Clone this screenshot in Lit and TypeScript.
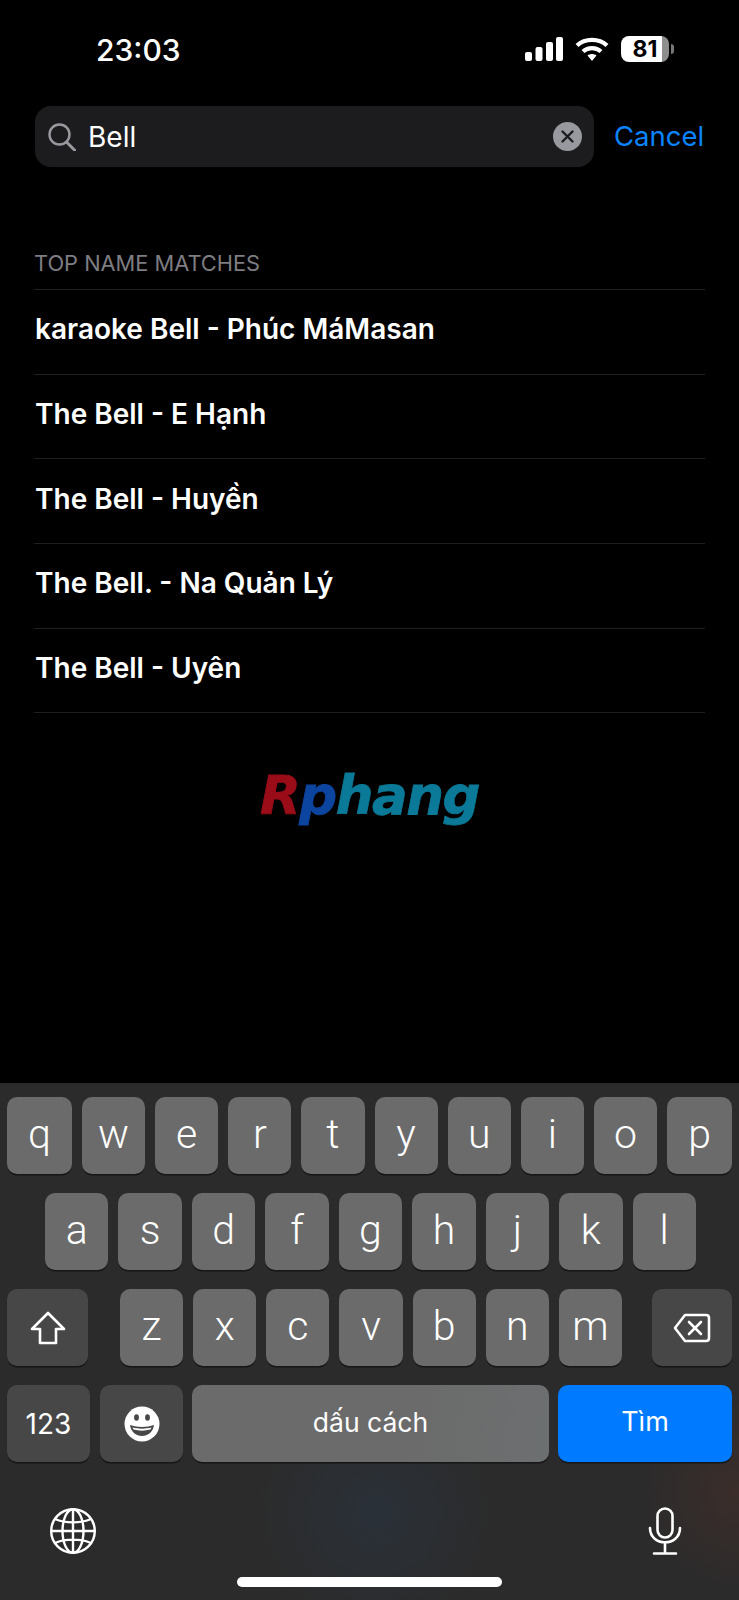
import { LitElement, html, css, svg } from "lit";
import { customElement } from "lit/decorators.js";

const row1 = ["q", "w", "e", "r", "t", "y", "u", "i", "o", "p"];
const row2 = ["a", "s", "d", "f", "g", "h", "j", "k", "l"];
const row3 = ["z", "x", "c", "v", "b", "n", "m"];
const names = ["karaoke Bell - Phúc MáMasan", "The Bell - E Hạnh", "The Bell - Huyền", "The Bell. - Na Quản Lý", "The Bell - Uyên"];

@customElement("app-root")
export class AppRoot extends LitElement {
  static styles = css`
    :host { display: block; width: 739px; height: 1600px; background: #000; color: #fff; font-family: Inter, "Noto Sans", sans-serif; overflow: hidden; }
    .screen { height: 1600px; display: flex; flex-direction: column; }
    .status { height: 106px; flex: none; display: flex; justify-content: space-between; align-items: flex-start; padding: 36px 66px 0 96px; box-sizing: border-box; }
    .time { font-size: 30px; font-weight: 500; line-height: 28px; }
    .status-icons { display: flex; align-items: center; gap: 12px; }
    .battery { position: relative; width: 48px; height: 26px; border-radius: 8px; background: linear-gradient(90deg, #fff 0 41px, #8e8e8e 41px); color: #000; font: 700 23px/26px Inter, sans-serif; text-align: center; margin-right: 4px; }
    .battery::after { content: ""; position: absolute; right: -5px; top: 8px; width: 3px; height: 10px; border-radius: 0 3px 3px 0; background: #777; }
    .search-row { display: flex; align-items: center; height: 61px; flex: none; padding-left: 35px; }
    .search { width: 559px; height: 61px; box-sizing: border-box; background: #1c1c1e; border-radius: 16px; display: flex; align-items: center; padding: 0 12px 0 13px; }
    .search-text { font-size: 28px; margin-left: 12px; flex: 1; }
    .clear { display: block; }
    .cancel { color: #0a84ff; font-size: 27.5px; margin-left: 20px; padding-bottom: 2px; }
    .list { padding: 0 34px; margin-top: 78px; flex: none; }
    .label { color: #7d7d82; font-size: 21.8px; line-height: 34px; padding: 1px 1px 10px 0; height: 45px; box-sizing: border-box; border-bottom: 1px solid #1f1f1f; }
    .item { height: 84.7px; box-sizing: border-box; border-bottom: 1px solid #1f1f1f; display: flex; align-items: center; font-size: 28px; font-weight: 600; padding: 0 1px 5px; }
    .logo-wrap { flex: 1; display: flex; justify-content: center; padding-top: 53px; }
    .logo { font: italic 700 53px/60px "DejaVu Sans", sans-serif; letter-spacing: -1.5px; height: 60px; -webkit-text-stroke: 0.8px currentColor; }
    .logo .r { color: #9a0d18; }
    .logo .p { color: #0c45a0; }
    .logo .h { color: #0b7a98; }
    .kb { flex: none; height: 517px; box-sizing: border-box; padding-top: 14px; display: flex; flex-direction: column;
      background:
        radial-gradient(circle at 375px 430px, rgba(40,60,85,.32), transparent 120px),
        radial-gradient(circle at 739px 410px, rgba(95,50,40,.3), transparent 100px),
        #2b2b2b; }
    .row { display: flex; height: 77px; margin: 0 7px 19px; gap: 10px; flex: none; }
    .row.two { margin: 0 43px 19px 45px; }
    .key { flex: 1 1 0; border-radius: 10px; background: #6b6b6b; box-shadow: 0 1.5px 0 #161616; display: flex; align-items: center; justify-content: center; font-family: Roboto, sans-serif; font-weight: 300; font-size: 41px; padding-bottom: 4px; box-sizing: border-box; min-width: 0; }
    .edge { flex: 0 0 65px; }
    .dark { background: #474747; }
    .shift { flex: 0 0 81px; padding: 0; margin-right: 22px; }
    .del { flex: 0 0 80px; padding: 0; margin-left: 20px; }
    .num { flex: 0 0 83px; font: 400 28px Inter, sans-serif; padding: 0; }
    .emoji { flex: 0 0 83px; padding: 0; margin-right: -1px; }
    .space { flex: 0 0 357px; font: 400 26.5px Inter, sans-serif; background: linear-gradient(100deg, #6b6b6b 60%, #6c6f70); padding: 0 0 4px; margin-right: -1px; }
    .go { flex: 0 0 174px; background: #007aff; font: 400 27px Inter, sans-serif; padding: 0 0 4px; }
    .bottom { display: flex; justify-content: space-between; align-items: center; padding: 0 57px 0 50px; height: 48px; margin-top: 26px; flex: none; }
    .home-wrap { display: flex; justify-content: center; margin-top: 22px; }
    .home { width: 265px; height: 10px; border-radius: 5px; background: #fff; }
    svg { display: block; }
  `;

  private icon(w: number, h: number, body: unknown) {
    return html`<svg width=${w} height=${h} viewBox="0 0 ${w} ${h}" fill="none">${body}</svg>`;
  }

  render() {
    return html`<div class="screen">
      <div class="status">
        <div class="time">23:03</div>
        <div class="status-icons">
          ${this.icon(38, 24, svg`<g fill="#fff"><rect x="0" y="15" width="7" height="9" rx="2"/><rect x="10.500" y="10" width="7" height="14" rx="2"/><rect x="21" y="5" width="7" height="19" rx="2"/><rect x="31" y="0" width="7" height="24" rx="2"/></g>`)}
          ${this.icon(34, 24, svg`<g stroke="#fff" stroke-width="4.200"><path d="M2 8.500C10 1 24 1 32 8.500"/><path d="M8 14.500C13 10 21 10 26 14.500"/></g><path d="M12.500 18.500C15 16.500 19 16.500 21.500 18.500L17 24Z" fill="#fff"/>`)}
          <div class="battery">81</div>
        </div>
      </div>
      <div class="search-row">
        <div class="search">
          ${this.icon(28, 28, svg`<circle cx="11.500" cy="11.500" r="10" stroke="#98989f" stroke-width="2.400"/><path d="M18.500 19L27 27.500" stroke="#98989f" stroke-width="3" stroke-linecap="round"/>`)}
          <span class="search-text">Bell</span>
          <span class="clear">${this.icon(29, 29, svg`<circle cx="14.500" cy="14.500" r="14.500" fill="#98989f"/><path d="M9.500 9.500L19.500 19.500M19.500 9.500L9.500 19.500" stroke="#1c1c1e" stroke-width="2.400" stroke-linecap="round"/>`)}</span>
        </div>
        <span class="cancel">Cancel</span>
      </div>
      <div class="list">
        <div class="label">TOP NAME MATCHES</div>
        ${names.map((n) => html`<div class="item">${n}</div>`)}
      </div>
      <div class="logo-wrap"><div class="logo"><span class="r">R</span><span class="p">p</span><span class="h">hang</span></div></div>
      <div class="kb">
        <div class="row">${row1.map((k, i) => html`<div class="key ${i === 0 || i === 9 ? "edge" : ""}">${k}</div>`)}</div>
        <div class="row two">${row2.map((k) => html`<div class="key">${k}</div>`)}</div>
        <div class="row">
          <div class="key dark shift">${this.icon(36, 34, svg`<path d="M18 2L34 18H26V32H10V18H2Z" stroke="#fff" stroke-width="2.600" stroke-linejoin="round"/>`)}</div>
          ${row3.map((k) => html`<div class="key">${k}</div>`)}
          <div class="key dark del">${this.icon(38, 30, svg`<path d="M12 2H33Q36 2 36 5V25Q36 28 33 28H12L2 15Z" stroke="#fff" stroke-width="2.600" stroke-linejoin="round"/><path d="M16 9L28 21M28 9L16 21" stroke="#fff" stroke-width="2.600" stroke-linecap="round"/>`)}</div>
        </div>
        <div class="row">
          <div class="key dark num">123</div>
          <div class="key dark emoji">${this.icon(36, 36, svg`<circle cx="18" cy="18" r="17.500" fill="#fff"/><ellipse cx="12.500" cy="11.500" rx="2.400" ry="3.200" fill="#474747"/><ellipse cx="23.500" cy="11.500" rx="2.400" ry="3.200" fill="#474747"/><path d="M6 19C13 21.500 23 21.500 30 19C29 26 24 30 18 30C12 30 7 26 6 19Z" fill="#474747"/><path d="M8.500 21.500C14 23 22 23 27.500 21.500L26.500 23.500C21 25 15 25 9.500 23.500Z" fill="#fff"/>`)}</div>
          <div class="key space">dấu cách</div>
          <div class="key go">Tìm</div>
        </div>
        <div class="bottom">
          ${this.icon(46, 46, svg`<g stroke="#fff" stroke-width="2.400"><circle cx="23" cy="23" r="21.800"/><ellipse cx="23" cy="23" rx="10.500" ry="21.800"/><path d="M23 1V45M1.500 23H44.500M5 11C15 15.500 31 15.500 41 11M5 35C15 30.500 31 30.500 41 35"/></g>`)}
          ${this.icon(34, 48, svg`<g stroke="#fff" stroke-width="2.600" stroke-linecap="round"><rect x="9.500" y="1.500" width="15" height="29" rx="7.500"/><path d="M2 21C2 40 32 40 32 21M17 37V46M6 46.500H28"/></g>`)}
        </div>
        <div class="home-wrap"><div class="home"></div></div>
      </div>
    </div>`;
  }
}
